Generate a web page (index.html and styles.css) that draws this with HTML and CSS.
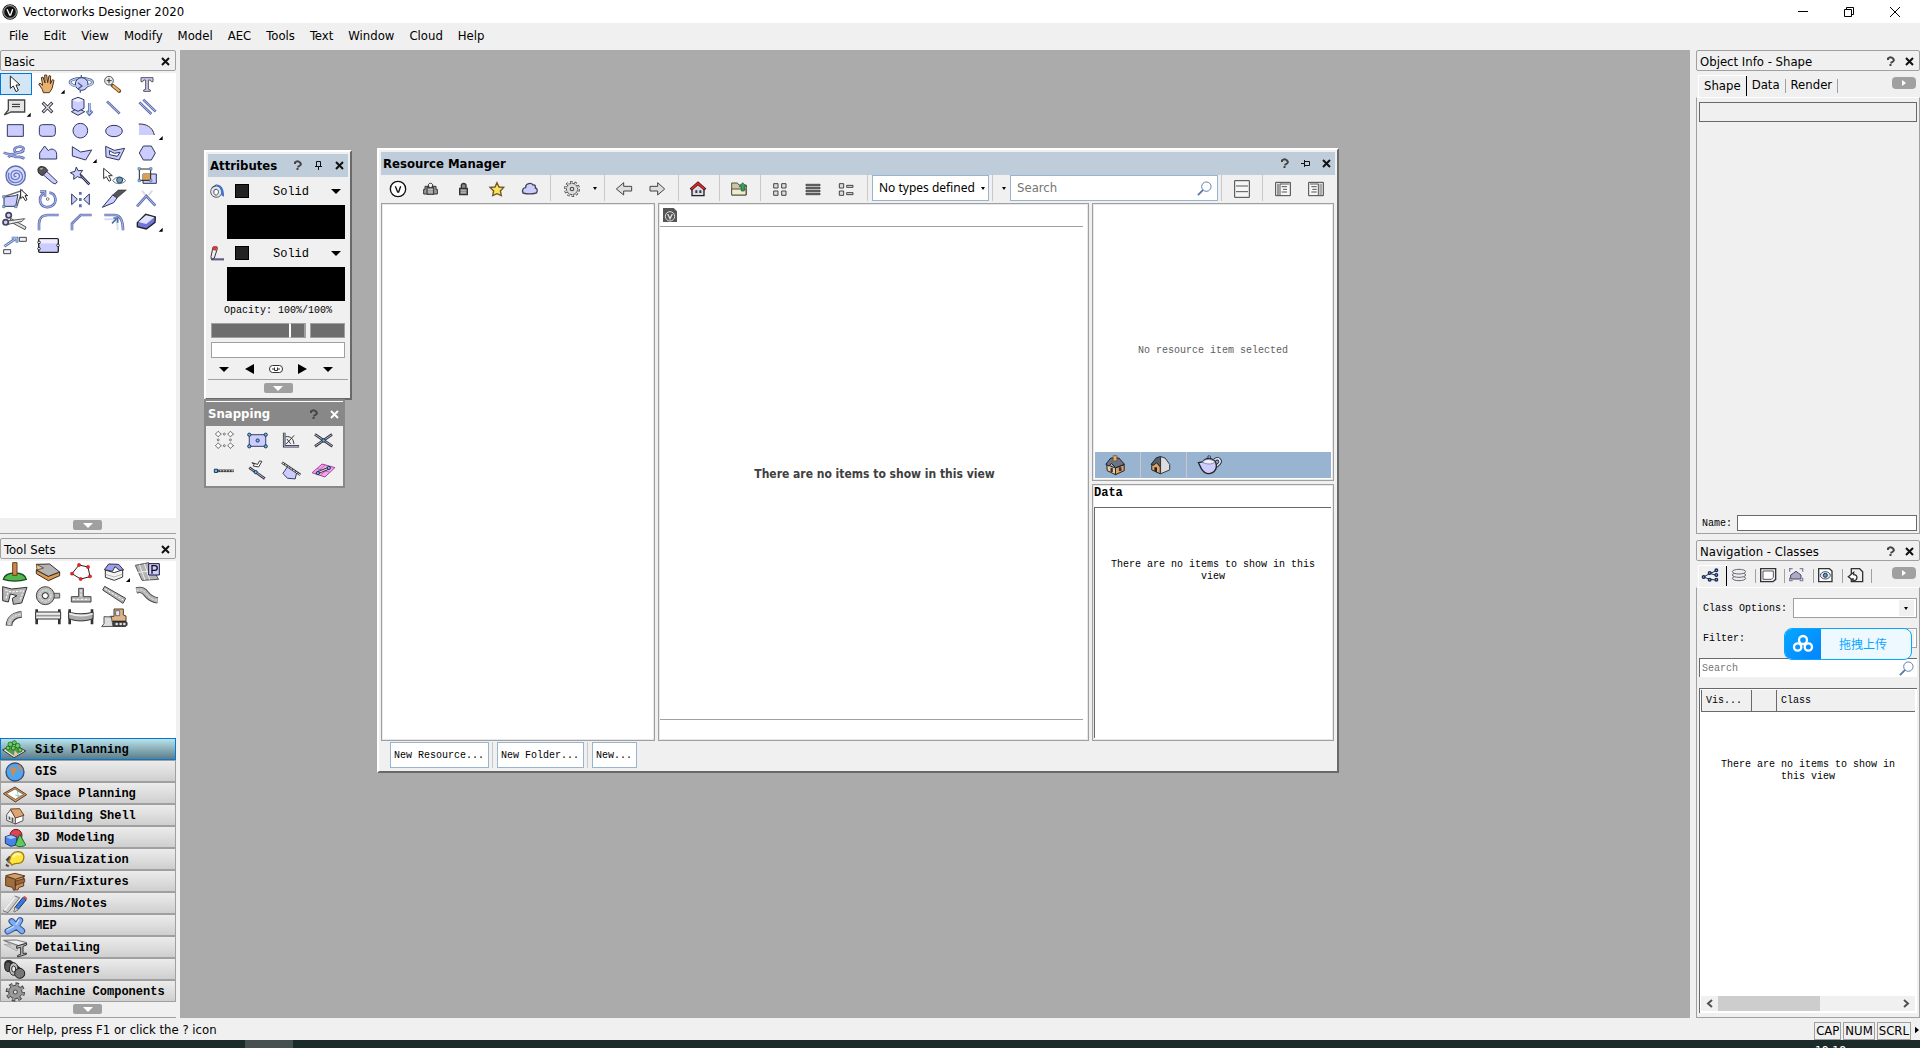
FILE: index.html
```
<!DOCTYPE html>
<html lang="en">
<head>
    <meta charset="utf-8">
    <title>Vectorworks Designer 2020</title>
    <link rel="stylesheet" href="styles.css">
</head>
<body>
    <header class="titlebar">
        <svg class="app-logo" viewBox="0 0 48 48"><circle cx="24" cy="24" r="23" fill="#222"/><circle cx="24" cy="24" r="19" fill="#111" stroke="#fff" stroke-width="2"/><path d="M15 16l8 17h3l6-17" fill="none" stroke="#fff" stroke-width="4"/></svg>
        <span class="app-name">Vectorworks Designer 2020</span>
        <div class="win-controls">
            <button aria-label="Minimize"><svg viewBox="0 0 12 12"><path d="M1 5.500h10"/></svg></button>
            <button aria-label="Restore"><svg viewBox="0 0 12 12"><path d="M1.500 3.500h7v7h-7zM3.500 3.500v-2h7v7h-2"/></svg></button>
            <button aria-label="Close"><svg viewBox="0 0 12 12"><path d="M1 1l10 10M11 1L1 11"/></svg></button>
        </div>
    </header>

    <nav class="menubar">
        <button>File</button><button>Edit</button><button>View</button><button>Modify</button><button>Model</button><button>AEC</button><button>Tools</button><button>Text</button><button>Window</button><button>Cloud</button><button>Help</button>
    </nav>

    <main class="workspace">
        <aside class="left-col">
            <section class="palette basic">
                <div class="pal-head"><h2>Basic</h2><button class="x" aria-label="Close Basic"><svg viewBox="0 0 9 9"><path d="M1 1l7 7M8 1L1 8"/></svg></button></div>
                <div class="tools grow">
                    <button class="on" aria-label="Selection"><svg viewBox="0 84 96 66"><path d="M31 93v37l9-7 8 17 7-4-7-16h12z" fill="#fff" stroke="#222" stroke-width="3"/></svg></button>
                    <button aria-label="Pan"><svg viewBox="96 84 96 66"><path d="M127 143l-3-10-11-16 4-3 8 7-4-23 5-2 6 18-1-24h6l3 23 4-21 5 1-1 24 6-13 5 2-6 25-8 12z" fill="#e9b070" stroke="#4c3420" stroke-width="3"/><path d="M191 134v12h-12z"/></svg></button>
                    <button aria-label="Flyover"><svg viewBox="198 84 96 66"><ellipse cx="244" cy="112" rx="34" ry="12" fill="none" stroke="#4a608c" stroke-width="8"/><ellipse cx="244" cy="112" rx="34" ry="12" fill="none" stroke="#b5cdf2" stroke-width="4"/><circle class="s" cx="245" cy="117" r="19"/><path d="M211 116c14 12 52 12 67-1" fill="none" stroke="#b5cdf2" stroke-width="4"/><path class="v" d="M234 113l12 10-12 9M244 90v8M241 136v7"/></svg></button>
                    <button aria-label="Zoom"><svg viewBox="297 84 96 66"><path d="M337 121l21 17" stroke="#6d4a20" stroke-width="11" stroke-linecap="round"/><path d="M340 123l17 14" stroke="#efb76c" stroke-width="6" stroke-linecap="round"/><circle cx="327" cy="107" r="13" fill="#e9eef0" stroke="#555" stroke-width="3"/><path d="M320 107h15M327 100v15" stroke="#333" stroke-width="3"/></svg></button>
                    <button aria-label="Text"><svg viewBox="396 84 96 66"><path d="M423 98h36v12h-5l-3-5h-6v28l6 2v4h-20v-4l6-2v-28h-6l-3 5h-5z" fill="#ccf" stroke="#555" stroke-width="3"/></svg></button>

                    <button aria-label="Callout"><svg viewBox="0 153 96 66"><path d="M25 165h49v36H33l-20 9 12-15z" fill="#e6e6e6" stroke="#444" stroke-width="4"/><path d="M36 178h24M36 185h24" stroke="#222" stroke-width="3"/><path d="M92 203v12H80z"/></svg></button>
                    <button aria-label="Locus"><svg viewBox="99 153 96 66"><path d="M128 173l29 29M157 173l-29 29" stroke="#333" stroke-width="9"/><path d="M130 175l25 25M155 175l-25 25" stroke="#dde" stroke-width="4"/></svg></button>
                    <button aria-label="Extrude"><svg viewBox="198 153 96 66"><path class="s" d="M214 200l20-10 20 10-20 11z"/><path class="s" d="M216 164l18-7 18 7v26l-18 9-18-9z"/><path d="M218 166l16 6 16-6-16-6z" fill="#f2f2ff"/><path class="b" d="M268 174v29M260 198l8 10 9-10"/><path class="c sky" d="M268 174v30M261 199l7 8 7-8"/></svg></button>
                    <button aria-label="Line"><svg viewBox="297 153 96 66"><path class="b" d="M321 169l38 37"/><path class="c" d="M322 170l36 35"/></svg></button>
                    <button aria-label="Double Line"><svg viewBox="396 153 96 66"><path class="b" d="M418 172l36 35M430 164l37 36"/><path class="c" d="M419 173l34 33M431 165l35 34"/></svg></button>

                    <button aria-label="Rectangle"><svg viewBox="0 222 96 66"><path class="s" d="M22 239h48v35H22z"/></svg></button>
                    <button aria-label="Rounded Rectangle"><svg viewBox="99 222 96 66"><rect class="s" x="118" y="239" width="48" height="35" rx="9"/></svg></button>
                    <button aria-label="Circle"><svg viewBox="198 222 96 66"><circle class="s" cx="241" cy="257" r="22"/></svg></button>
                    <button aria-label="Oval"><svg viewBox="297 222 96 66"><ellipse class="s" cx="342" cy="258" rx="25" ry="17"/></svg></button>
                    <button aria-label="Arc"><svg viewBox="396 222 96 66"><path d="M417 237c22-1 40 9 46 33h-46z" fill="#ccf"/><path class="n" d="M416 237c22-1 42 9 47 33"/><path d="M488 273v12h-12z"/></svg></button>

                    <button aria-label="Freehand"><svg viewBox="0 291 96 66"><path class="b" d="M11 323c13 7 26 6 40 1 12-4 20-7 20-13 0-8-26-9-28 4-1 10 22 9 28 1M25 337c8-12 18 0 28-1 8-1 13 0 20 5"/><path class="c" d="M11 323c13 7 26 6 40 1 12-4 20-7 20-13 0-8-26-9-28 4-1 10 22 9 28 1M25 337c8-12 18 0 28-1 8-1 13 0 20 5"/></svg></button>
                    <button aria-label="Bezier"><svg viewBox="99 291 96 66"><path class="s" d="M119 342v-18l15-21 11 14c8-9 25-5 25 12v13z"/></svg></button>
                    <button aria-label="Polyline"><svg viewBox="198 291 96 66"><path class="s" d="M217 305l25 16 33-6-18 30-40-12z"/><path d="M290 342v12h-12z"/></svg></button>
                    <button aria-label="Double Polygon"><svg viewBox="297 291 96 66"><path class="s" d="M317 304l26 12 31-6-17 35-39-9z"/><path d="M328 317l15 8 17-3-8 12-23-5z" fill="#fff" stroke="#2d3a5c" stroke-width="3"/></svg></button>
                    <button aria-label="Polygon"><svg viewBox="396 291 96 66"><path class="s" d="M430 303h24l12 21-12 21h-24l-12-21z"/></svg></button>

                    <button aria-label="Spiral"><svg viewBox="0 360 96 66"><circle cx="47" cy="392" r="29" fill="#d8dbff" stroke="#5b6fb0" stroke-width="4"/><path class="p" d="M49 394c-5 3-10-3-6-7 7-7 18 0 15 9-5 12-24 10-25-4-1-16 20-22 31-8 9 15-1 29-19 29-15-1-24-16-18-30"/></svg></button>
                    <button aria-label="Eyedropper"><svg viewBox="99 360 96 66"><path class="s" d="M127 387l13-8 32 31-6 7-9-4z"/><path d="M116 368c8-7 23-2 27 9l-14 14c-9 1-20-12-13-23z" fill="#555" stroke="#222" stroke-width="3"/><path d="M121 372l7-2" stroke="#bbb" stroke-width="4"/></svg></button>
                    <button aria-label="Magic Wand"><svg viewBox="198 360 96 66"><path d="M240 389l28 29" stroke="#223" stroke-width="8"/><path d="M241 390l26 27" stroke="#aaf" stroke-width="3"/><path class="s" d="M229 366l5 11 14-1-8 11 5 12-13-4-11 8 1-13-11-7 14-4z"/></svg></button>
                    <button aria-label="Visibility"><svg viewBox="297 360 96 66"><path d="M311 370v31l8-6 8 14 6-4-7-13h11z" fill="#fff" stroke="#333" stroke-width="3"/><path d="M338 407c10-14 28-14 39 0-11 12-29 12-39 0z" fill="#fff" stroke="#678" stroke-width="3"/><circle cx="359" cy="405" r="9" fill="#6a9cc0" stroke="#345" stroke-width="3"/></svg></button>
                    <button aria-label="Attribute Mapping"><svg viewBox="396 360 96 66"><path class="s" d="M429 387h40v28h-40z"/><path d="M429 386h24v20h-24z" fill="#dba050"/><path d="M418 372h34v34h-34z" fill="none" stroke="#222" stroke-width="3"/><path class="k" d="M414 368h7v7h-7zM449 368h7v7h-7zM414 403h7v7h-7zM449 403h7v7h-7z"/></svg></button>

                    <button aria-label="Reshape"><svg viewBox="0 429 96 66"><path class="s" d="M12 456l34-4 8-4-7 36H12z"/><path d="M12 455l54-18-15 46" fill="none" stroke="#666" stroke-width="4"/><path d="M62 433v28l7-6 7 12 5-3-6-12h8z" fill="#fff" stroke="#222" stroke-width="3"/><path class="k" d="M8 452h7v7H8zM8 481h7v7H8zM44 481h7v7h-7z"/></svg></button>
                    <button aria-label="Rotate"><svg viewBox="99 429 96 66"><path class="b" d="M130 445c-16 14-12 37 8 41 17 3 31-10 28-26-2-10-9-16-18-17M120 440h15v15"/><path class="c" d="M130 445c-16 14-12 37 8 41 17 3 31-10 28-26-2-10-9-16-18-17M120 440h15v15"/><circle cx="143" cy="462" r="4" fill="none" stroke="#777" stroke-width="3"/></svg></button>
                    <button aria-label="Mirror"><svg viewBox="198 429 96 66"><path class="s" d="M215 447l17 16-17 16zM268 447l-17 16 17 16z"/><path class="b" d="M241 441v8M241 459v9M241 478v9"/></svg></button>
                    <button aria-label="Split"><svg viewBox="297 429 96 66"><path d="M379 435l-28 24-13-9 17-15z" fill="#555" stroke="#333" stroke-width="2"/><path class="s" d="M338 450l13 9-10 14-34 14z"/></svg></button>
                    <button aria-label="Connect"><svg viewBox="396 429 96 66"><path d="M426 437l10 13M457 437l-11 13" stroke="#ddd" stroke-width="6"/><path class="b" d="M411 484l28-31 27 29"/><path class="c" d="M411 484l28-31 27 29"/></svg></button>

                    <button aria-label="Trim"><svg viewBox="0 498 96 66"><path d="M32 520l46 26-3 8-45-24z" fill="#ddd" stroke="#555" stroke-width="3"/><path d="M22 528l52-7-8 8-42 9z" fill="#eee" stroke="#555" stroke-width="3"/><circle cx="26" cy="511" r="8" fill="#ccf" stroke="#445" stroke-width="5"/><circle cx="17" cy="532" r="8" fill="#ccf" stroke="#445" stroke-width="5"/></svg></button>
                    <button aria-label="Fillet"><svg viewBox="99 498 96 66"><path class="b" d="M117 556v-20c0-15 10-26 27-26h32"/><path class="c" d="M117 556v-20c0-15 10-26 27-26h32"/></svg></button>
                    <button aria-label="Chamfer"><svg viewBox="198 498 96 66"><path class="b" d="M216 556v-20l26-26h33"/><path class="c" d="M216 556v-20l26-26h33"/></svg></button>
                    <button aria-label="Offset"><svg viewBox="297 498 96 66"><path d="M313 523h26c9 0 14 10 14 32" fill="none" stroke="#d8dcf4" stroke-width="6"/><path class="b" d="M313 510h30c17 0 26 15 26 46"/><path class="c" d="M313 510h30c17 0 26 15 26 46"/><path d="M336 535l13-13M340 519h13v14" fill="none" stroke="#48709c" stroke-width="5"/></svg></button>
                    <button aria-label="Eraser"><svg viewBox="396 498 96 66"><path d="M412 533l25-25 29 8-1 16-26 20-27-7z" fill="#7373dd" stroke="#222" stroke-width="4"/><path d="M415 531l23-20 25 6-24 20z" fill="#e3e3ff"/><path d="M488 548v12h-12z"/></svg></button>

                    <button aria-label="Align"><svg viewBox="0 567 96 66"><path class="b" d="M13 604l34-23M35 579h16v14"/><path class="c sky" d="M13 604l34-23M35 579h16v14"/><path d="M58 577h21v12H58zM11 614h21v12H11z" fill="#eef" stroke="#444" stroke-width="3"/></svg></button>
                    <button aria-label="Symbol"><svg viewBox="99 567 96 66"><rect x="116" y="581" width="59" height="41" rx="3" fill="#ccf" stroke="#222" stroke-width="4"/><path d="M118 583h54v12h-54z" fill="#eef"/><circle class="r" cx="117" cy="592" r="4"/><circle class="r" cx="117" cy="611" r="4"/><circle class="r" cx="174" cy="601" r="4"/></svg></button>
                </div>
                <button class="fold" aria-label="Collapse Basic"></button>
            </section>

            <section class="palette">
                <div class="pal-head"><h2>Tool Sets</h2><button class="x" aria-label="Close Tool Sets"><svg viewBox="0 0 9 9"><path d="M1 1l7 7M8 1L1 8"/></svg></button></div>
                <div class="tools set">
                    <button aria-label="Stake"><svg viewBox="0 153 96 66"><path d="M10 208c3-12 14-19 35-19s31 7 34 19c-20 7-50 7-69 0z" fill="#53b64f" stroke="#154d1e" stroke-width="4"/><path d="M38 158h13v38H38z" fill="#c8874b" stroke="#6b3e1e" stroke-width="3"/></svg></button>
                    <button aria-label="Site Modifier"><svg viewBox="99 153 96 66"><path d="M109 180l36 19 34-13v11l-34 15-36-21z" fill="#e09a50" stroke="#3c2b1c" stroke-width="3"/><path d="M109 180l14-6-14-11 40-1 30 24-34 13z" fill="#b4b4b4" stroke="#333" stroke-width="3"/><path d="M109 163l22 11-20 6z" fill="#f3c08c" stroke="#3c2b1c" stroke-width="2"/></svg></button>
                    <button aria-label="Property Line"><svg viewBox="198 153 96 66"><path d="M237 165l27 6 6 29-28 7-26-16z" fill="#fff" stroke="#222" stroke-width="3"/><g fill="#e22" stroke="#900"><circle cx="237" cy="165" r="5"/><circle cx="264" cy="171" r="5"/><circle cx="270" cy="199" r="5"/><circle cx="242" cy="207" r="5"/><circle cx="216" cy="191" r="5"/></g></svg></button>
                    <button aria-label="Massing Model"><svg viewBox="297 153 96 66"><path d="M316 180l27 8 25-9v22l-25 10-27-9z" fill="#f3f3f3" stroke="#333" stroke-width="3"/><path d="M316 193l27 8 25-9" fill="none" stroke="#999" stroke-width="2"/><path d="M313 179l13-17 30 1 15 17-12 1-14-11-8 14z" fill="#9a9df5" stroke="#333" stroke-width="3"/><path d="M390 204v12h-12z"/></svg></button>
                    <button aria-label="Parking"><svg viewBox="396 153 96 66"><path d="M406 166l40-8 30 50-50 3z" fill="#b4b4b4" stroke="#555" stroke-width="3"/><path d="M418 164l17 46M433 161l16 48M414 187l48-5" stroke="#eee" stroke-width="3"/><path d="M446 161h32v34h-32z" fill="#ccf" stroke="#15153c" stroke-width="3"/><path d="M456 191v-24h9c9 0 9 14 0 14h-8" fill="none" stroke="#111" stroke-width="4"/></svg></button>

                    <button aria-label="Hardscape"><svg viewBox="0 222 96 66"><path d="M8 230l27 7 46-5-16 47-25 4-3-18 14-8-20-5-6 24-17-4z" fill="#b4b4b4" stroke="#333" stroke-width="3"/><path d="M16 240l19 6 36-4-12 31M18 265l6-18" fill="none" stroke="#fff" stroke-width="3" stroke-dasharray="7 4"/></svg></button>
                    <button aria-label="Cul-de-sac"><svg viewBox="99 222 96 66"><path d="M155 250h24v14h-24z" fill="#bbb" stroke="#555" stroke-width="3"/><circle cx="136" cy="257" r="27" fill="#bbb" stroke="#444" stroke-width="3"/><circle cx="136" cy="257" r="17" fill="none" stroke="#fff" stroke-width="2" stroke-dasharray="7 4"/><circle cx="136" cy="257" r="9" fill="#fff" stroke="#222" stroke-width="3"/></svg></button>
                    <button aria-label="Roadway Tee"><svg viewBox="198 222 96 66"><path d="M214 260h22v-25h14v25h23v16h-59z" fill="#b4b4b4" stroke="#444" stroke-width="3"/><path d="M218 268h51M243 239v20" stroke="#fff" stroke-width="3" stroke-dasharray="8 4"/></svg></button>
                    <button aria-label="Straight Road"><svg viewBox="297 222 96 66"><path d="M314 229l63 36-8 15-61-40z" fill="#b4b4b4" stroke="#444" stroke-width="3"/><path d="M314 236l56 34" stroke="#fff" stroke-width="3" stroke-dasharray="8 4"/></svg></button>
                    <button aria-label="Spline Road"><svg viewBox="396 222 96 66"><path d="M409 241c36-8 22 25 64 30" fill="none" stroke="#444" stroke-width="19"/><path d="M409 241c36-8 22 25 64 30" fill="none" stroke="#b4b4b4" stroke-width="14"/><path d="M409 241c36-8 22 25 64 30" fill="none" stroke="#fff" stroke-width="2" stroke-dasharray="7 4"/></svg></button>

                    <button aria-label="Curved Road"><svg viewBox="0 291 96 66"><path d="M27 347c1-18 14-32 38-34" fill="none" stroke="#444" stroke-width="20"/><path d="M27 345c1-18 14-30 37-32" fill="none" stroke="#bbb" stroke-width="14"/><path d="M27 345c1-18 14-30 37-32" fill="none" stroke="#fff" stroke-width="2" stroke-dasharray="7 4"/></svg></button>
                    <button aria-label="Guardrail"><svg viewBox="99 291 96 66"><path class="n t" d="M110 298v45M178 298v45"/><path d="M107 306h75v21h-75z" fill="#eee" stroke="#333" stroke-width="3"/><path d="M109 317h71" stroke="#999" stroke-width="5"/></svg></button>
                    <button aria-label="Curved Guardrail"><svg viewBox="198 291 96 66"><path class="n t" d="M209 298v45M276 298v45"/><path d="M206 306c22 7 51 7 73 0v20c-22 9-51 9-73 0z" fill="#aaa" stroke="#333" stroke-width="3"/><path d="M208 311c22 7 49 7 70 0" fill="none" stroke="#eee" stroke-width="5"/></svg></button>
                    <button aria-label="Grading"><svg viewBox="297 291 96 66"><path d="M330 319h12v-22h28v18l8 3v16h-48z" fill="#dfb387" stroke="#4a3c31" stroke-width="3"/><path d="M347 302h12v15h-12z" fill="#dde9ff" stroke="#4a3c31" stroke-width="2"/><path d="M338 334h38c7 0 7 15 0 15h-38z" fill="#444" stroke="#222" stroke-width="3"/><g fill="#ddd"><circle cx="350" cy="342" r="4"/><circle cx="362" cy="342" r="4"/><circle cx="373" cy="342" r="4"/></g><path d="M312 320l22 1 5 28-34 1 7-9z" fill="#ddd" stroke="#555" stroke-width="3"/></svg></button>
                </div>
                <ul class="sets">
                    <li><button class="on"><svg viewBox="3 57 84 60"><path d="M8 87l34-17 35 20-35 20z" fill="#eee" stroke="#333" stroke-width="3"/><path d="M16 86l25-12 28 16-26 15z" fill="#5b9b4c"/><path d="M44 88l10 12-12 4z" fill="#ebc5bb"/><g fill="#62d456" stroke="#154d1e" stroke-width="2"><circle cx="24" cy="81" r="6"/><circle cx="31" cy="70" r="7"/><circle cx="43" cy="65" r="6"/><circle cx="53" cy="74" r="7"/><circle cx="60" cy="87" r="6"/><circle cx="40" cy="81" r="6"/></g></svg>Site Planning</button></li>
                    <li><button><svg viewBox="3 123 84 60"><circle cx="45" cy="153" r="27" fill="#4da5f0" stroke="#444c6c" stroke-width="4"/><path d="M29 145l10-9 12 8-1 7-7 4-1 13-6-6-2-10zM56 129l12 14-6 7-9-13z" fill="#c98b5b"/></svg>GIS</button></li>
                    <li><button><svg viewBox="3 189 84 60"><path d="M10 218l35-20 35 23-34 22z" fill="#d5985d" stroke="#573b27" stroke-width="3"/><path d="M19 218l26-14 26 17-25 14z" fill="#fff" stroke="#573b27" stroke-width="2"/><path d="M52 209l3 17 12-4M55 226l-9-4" fill="none" stroke="#5aa" stroke-width="2"/></svg>Space Planning</button></li>
                    <li><button><svg viewBox="3 255 84 60"><path d="M20 281l12-15 14 23v20l-26-11z" fill="#eee" stroke="#555" stroke-width="3"/><path d="M46 290l23-8v17l-23 10z" fill="#fff" stroke="#555" stroke-width="3"/><path d="M31 264l28-1 13 20-26 8z" fill="#dda574" stroke="#6c4324" stroke-width="3"/><path d="M26 286l5 2v9l-5-2zM35 289l5 2v13l-5-2z" fill="#555"/></svg>Building Shell</button></li>
                    <li><button><svg viewBox="3 321 84 60"><circle cx="48" cy="343" r="18" fill="#e2414f" stroke="#6c1c28" stroke-width="3"/><path d="M16 347l17-5 18 6-3 24-15 4-17-9z" fill="#4784e6" stroke="#19387b" stroke-width="3"/><path d="M17 348l16 7 16-6-16-6z" fill="#9ec6ff"/><path d="M59 339l18 33c-9 7-24 6-31 0z" fill="#61c866" stroke="#1e6229" stroke-width="3"/></svg>3D Modeling</button></li>
                    <li><button><svg viewBox="3 387 84 60"><path d="M22 421l11-12M19 428l9 4" stroke="#444" stroke-width="14"/><path d="M26 420c6-6 3-12 10-20 9-11 28-10 34 0 6 13-2 26-14 27-9 1-12-1-20 5z" fill="#ffe63f" stroke="#a07d14" stroke-width="4"/><path d="M39 409c4-10 15-13 22-6" fill="none" stroke="#fff8b8" stroke-width="6"/><path d="M19 424l11 8" stroke="#ccc" stroke-width="6"/></svg>Visualization</button></li>
                    <li><button><svg viewBox="3 453 84 60"><path d="M17 467l29 6v34l-5 1-4-9-20-5z" fill="#a36e3e" stroke="#5f3b1e" stroke-width="3"/><path d="M46 473l25-7v29l-14 4-4 8-7-1z" fill="#c49058" stroke="#5f3b1e" stroke-width="3"/><path d="M17 464l28-7 30 8-29 10z" fill="#d0a06b" stroke="#5f3b1e" stroke-width="3"/><path d="M47 480l27-7v10l-27 10z" fill="#9b6535" stroke="#422" stroke-width="2"/></svg>Furn/Fixtures</button></li>
                    <li><button><svg viewBox="3 519 84 60"><path d="M10 570l34-45 15 5-35 45z" fill="#ccc" stroke="#777" stroke-width="3"/><path d="M13 568l32-41" stroke="#eee" stroke-width="6"/><path d="M45 559l24-30 10 7-25 30-12 7z" fill="#3d79dd" stroke="#1b376d" stroke-width="3"/><path d="M69 529l4-5 9 7-3 5z" fill="#df5245"/><path d="M45 559l9 7-12 7z" fill="#ebc395"/></svg>Dims/Notes</button></li>
                    <li><button><svg viewBox="3 585 84 60"><path d="M35 601l14 14M60 598l-10 17M49 617l-26 14M50 616l16 14" stroke="#305294" stroke-width="19" stroke-linecap="round"/><path d="M35 601l14 14M60 598l-10 17M49 617l-26 14M50 616l16 14" stroke="#7fadf2" stroke-width="13" stroke-linecap="round"/><path d="M57 597l-9 13M21 627l19-10" stroke="#c8deff" stroke-width="4" stroke-linecap="round"/></svg>MEP</button></li>
                    <li><button><svg viewBox="3 651 84 60"><path d="M11 658l44 18-4 14L12 670l20 2z" fill="#ccc" stroke="#999" stroke-width="2"/><path d="M11 658l38-1 32 8-24 9z" fill="#eee" stroke="#777" stroke-width="3"/><path d="M50 675l30-8v5l-11 4v22l10-2v4l-26 8v-5l9-3v-21l-12 3z" fill="#bbb" stroke="#333" stroke-width="3"/></svg>Detailing</button></li>
                    <li><button><svg viewBox="3 717 84 60"><path d="M26 730l36 28" stroke="#333" stroke-width="27" stroke-linecap="round"/><ellipse cx="24" cy="737" rx="10" ry="15" fill="#555" stroke="#222" stroke-width="3"/><ellipse cx="41" cy="744" rx="13" ry="19" fill="#bbb" stroke="#222" stroke-width="3"/><ellipse cx="41" cy="744" rx="6" ry="9" fill="#eee" stroke="#333" stroke-width="3"/><circle cx="59" cy="757" r="15" fill="#777" stroke="#222" stroke-width="3"/></svg>Fasteners</button></li>
                    <li><button><svg viewBox="3 783 84 60"><circle cx="46" cy="813" r="24" fill="none" stroke="#444" stroke-width="10" stroke-dasharray="10 8.800"/><circle cx="46" cy="813" r="20" fill="#999" stroke="#444" stroke-width="3"/><circle cx="46" cy="813" r="22" fill="none" stroke="#999" stroke-width="8" stroke-dasharray="6 11.300" stroke-dashoffset="-2"/><circle cx="46" cy="813" r="6" fill="#ddd" stroke="#444" stroke-width="3"/></svg>Machine Components</button></li>
                </ul>
                <button class="fold" aria-label="Collapse Tool Sets"></button>
            </section>
        </aside>

        <section class="canvas">
            <div class="window attributes">
                <div class="win-head"><h2>Attributes</h2>
                    <button aria-label="Help"><svg class="q" viewBox="0 0 9 11"><path d="M2 4V2.500Q4.500 0 7 2.500T4.500 7M4.500 8v2"/></svg></button>
                    <button aria-label="Pin"><svg viewBox="0 0 9 9"><path d="M2.500 5.500v-5h4v5M1 5.500h7M4.500 6v3"/></svg></button>
                    <button class="x" aria-label="Close"><svg viewBox="0 0 9 9"><path d="M1 1l7 7M8 1L1 8"/></svg></button>
                </div>
                <div class="attr-row">
                    <svg class="attr-icon" viewBox="45 131 45 45"><circle cx="64" cy="154" r="17" fill="#e4e6f0" stroke="#556" stroke-width="3"/><path d="M61 133c16-2 27 10 26 36l-8-4c1-18-6-26-18-32z" fill="#3d73c8"/><path d="M57 150c8-8 17 1 12 10s-15 3-12-10zM50 142l14-8" fill="#fff" stroke="#445" stroke-width="3"/></svg>
                    <button class="swatch" aria-label="Fill colour"></button>
                    <label class="pick"><select aria-label="Fill style"><option>Solid</option></select></label>
                </div>
                <button class="ink" aria-label="Fill"></button>
                <div class="attr-row">
                    <svg class="attr-icon" viewBox="45 317 45 45"><path d="M49 357h38" stroke="#446" stroke-width="6"/><path d="M53 356h33" stroke="#99c" stroke-width="2"/><path d="M48 349l6-29h12l1 5-9 28-9 4z" fill="#eee" stroke="#334" stroke-width="3"/><path d="M52 329l3-11h12l-3 13z" fill="#d33c3c"/></svg>
                    <button class="swatch" aria-label="Pen colour"></button>
                    <label class="pick"><select aria-label="Pen style"><option>Solid</option></select></label>
                </div>
                <button class="ink" aria-label="Pen"></button>
                <label class="opacity" for="opacity">Opacity: 100%/100%</label>
                <div class="sliders"><input type="range" id="opacity" min="0" max="100" value="100"><button aria-label="Opacity settings"></button></div>
                <input class="line-style" type="text" aria-label="Line style">
                <div class="markers">
                    <button aria-label="Start marker style"><svg viewBox="0 0 16 10"><path d="M3 3h10L8 8z"/></svg></button>
                    <button aria-label="Start marker"><svg viewBox="0 0 16 10"><path d="M3 5l9-5v10z"/></svg></button>
                    <button aria-label="Link markers"><svg viewBox="0 0 16 10"><path d="M4.500 1.500h7q3 0 3 3.500t-3 3.500h-7q-3 0-3-3.500t3-3.500z" fill="#fff" stroke="#333"/><path d="M4 5h2M10 5h2M6.500 3.500v3h3v-3" fill="none" stroke="#333"/></svg></button>
                    <button aria-label="End marker"><svg viewBox="0 0 16 10"><path d="M13 5L4 0v10z"/></svg></button>
                    <button aria-label="End marker style"><svg viewBox="0 0 16 10"><path d="M3 3h10L8 8z"/></svg></button>
                </div>
                <button class="fold" aria-label="Collapse Attributes"></button>
            </div>

            <div class="snapping">
                <div class="win-head"><h2>Snapping</h2>
                    <button aria-label="Help"><svg class="q" viewBox="0 0 9 11"><path d="M2 4V2.500Q4.500 0 7 2.500T4.500 7M4.500 8v2"/></svg></button>
                    <button class="x" aria-label="Close"><svg viewBox="0 0 9 9"><path d="M1 1l7 7M8 1L1 8"/></svg></button>
                </div>
                <div class="snap-grid">
                    <button aria-label="Snap to Grid"><svg viewBox="40 855 99 93"><g fill="#fff" stroke="#333" stroke-width="2"><path d="M70 871l4 5 6 4-6 4-4 5-4-5-5-4 5-4zM108 871l4 5 6 4-6 4-4 5-4-5-5-4 5-4zM70 907l4 5 6 4-6 4-4 5-4-5-5-4 5-4zM108 907l4 5 6 4-6 4-4 5-4-5-5-4 5-4z"/><circle cx="89" cy="880" r="3"/><circle cx="89" cy="916" r="3"/><circle cx="70" cy="898" r="3"/><circle cx="108" cy="898" r="3"/></g></svg></button>
                    <button aria-label="Snap to Object"><svg viewBox="139 855 99 93"><path class="s" d="M163 882h51v36h-51z"/><g class="k2"><circle cx="163" cy="882" r="5"/><circle cx="214" cy="882" r="5"/><circle cx="163" cy="918" r="5"/><circle cx="214" cy="918" r="5"/><circle cx="189" cy="900" r="5"/></g></svg></button>
                    <button aria-label="Snap to Angle"><svg viewBox="238 855 99 93"><path class="n t" d="M268 876v42h46"/><path class="c" d="M268 877v41h45"/><path class="n" d="M274 911l25-27M273 888c15-2 24 7 25 23M276 895l12 15"/></svg></button>
                    <button aria-label="Snap to Intersection"><svg viewBox="337 855 99 93"><path class="n t" d="M360 881l54 37M413 881l-53 37"/><path class="c" d="M361 882l52 35M412 882l-51 35"/><circle class="k2" cx="387" cy="900" r="5"/></svg></button>
                    <button aria-label="Smart Points"><svg viewBox="40 948 99 93"><path class="n t" d="M70 994h48"/><path d="M75 994h42" stroke="#fff" stroke-width="3" stroke-dasharray="5 4"/><path class="k2" d="M58 989h10v10H58z"/></svg></button>
                    <button aria-label="Snap to Distance"><svg viewBox="139 948 99 93"><path class="n t" d="M163 984l48 34"/><path class="c" d="M164 985l46 32"/><path d="M171 969l8 3-4 7 17 3 10-17-7-2-6 11z" fill="#fff" stroke="#333" stroke-width="3"/><circle class="k2" cx="183" cy="998" r="5"/></svg></button>
                    <button aria-label="Smart Edge"><svg viewBox="238 948 99 93"><path class="s" d="M279 980l28 18-5 21-24-2-14-15z"/><path class="n t" d="M261 968l57 38"/><path d="M262 969l55 37" stroke="#fff" stroke-width="3" stroke-dasharray="7 3"/></svg></button>
                    <button aria-label="Snap to Working Plane"><svg viewBox="337 948 99 93"><path d="M351 1000l31-27 40 11-31 29z" fill="#f3a4ea" stroke="#a53f9d" stroke-width="3"/><path d="M367 987l38 11M378 1007l29-26M361 1002l31-27" stroke="#a53f9d" stroke-width="2"/><path d="M369 1000l33-14" stroke="#222" stroke-width="8"/><path d="M369 1000l33-14" stroke="#ddd" stroke-width="4"/><g class="k2"><circle cx="369" cy="1001" r="5"/><circle cx="403" cy="985" r="5"/></g></svg></button>
                </div>
            </div>

            <div class="window resources">
                <div class="win-head"><h2>Resource Manager</h2>
                    <button aria-label="Help"><svg class="q" viewBox="0 0 9 11"><path d="M2 4V2.500Q4.500 0 7 2.500T4.500 7M4.500 8v2"/></svg></button>
                    <button aria-label="Pin"><svg viewBox="0 0 9 9"><path d="M3.500 2.500h5v4h-5M3.500 1v7M0 4.500h3"/></svg></button>
                    <button class="x" aria-label="Close"><svg viewBox="0 0 9 9"><path d="M1 1l7 7M8 1L1 8"/></svg></button>
                </div>
                <div class="toolbar">
                    <button aria-label="Vectorworks Libraries"><svg viewBox="36 105 99 78"><circle cx="84" cy="147" r="23" fill="#fff" stroke="#111" stroke-width="4"/><path d="M76 139l7 17h3l6-17" fill="none" stroke="#111" stroke-width="4"/></svg></button>
                    <button aria-label="Workgroup Libraries"><svg viewBox="135 105 99 78"><g fill="#999" stroke="#333" stroke-width="3"><path d="M161 162v-14h4v-9h12v23zM202 162v-14h-4v-9h-12v23z"/><path d="M175 143v-8c1-7 12-7 13 0v8" fill="none"/><path d="M171 143h20v20h-20z"/><path d="M174 149h14M174 156h14" stroke="#ddd" stroke-width="2"/></g></svg></button>
                    <button aria-label="User Libraries"><svg viewBox="234 105 99 78"><g fill="#888" stroke="#333" stroke-width="4"><path d="M274 146v-11c2-6 12-6 14 0v11"/><path d="M269 145h23v19h-23z"/><path d="M273 152h15M273 158h15" stroke="#ccc" stroke-width="2"/></g></svg></button>
                    <button aria-label="Favorites"><svg viewBox="333 105 99 78"><path d="M381 128l6 13 14 1-10 11 3 14-13-6-13 6 3-14-11-11 15-1z" fill="#fbe25c" stroke="#6c5723" stroke-width="4"/></svg></button>
                    <button aria-label="Cloud"><svg viewBox="432 105 99 78"><path d="M459 159c-4-11 2-16 8-16-1-13 17-17 22-8 7-2 8 4 7 9 8 1 6 12 3 15-12 3-29 3-40 0z" fill="#ccf" stroke="#445" stroke-width="4"/></svg></button>
                    <i class="sep"></i>
                    <button aria-label="Settings"><svg viewBox="555 105 99 78"><circle cx="606" cy="147" r="20" fill="none" stroke="#444" stroke-width="8" stroke-dasharray="7 5.600"/><circle cx="606" cy="147" r="17" fill="#ddd" stroke="#555" stroke-width="3"/><circle cx="606" cy="147" r="19" fill="none" stroke="#ddd" stroke-width="6" stroke-dasharray="4 7.900" stroke-dashoffset="-1"/><circle cx="606" cy="147" r="5" fill="#fff" stroke="#555" stroke-width="4"/></svg></button>
                    <button class="caret" aria-label="Settings menu"></button>
                    <i class="sep"></i>
                    <button aria-label="Back"><svg viewBox="720 105 99 78"><path class="a" d="M742 147l22-19v11h24v14h-24v12z"/></svg></button>
                    <button aria-label="Forward"><svg viewBox="819 105 99 78"><path class="a" d="M887 147l-21-19v11h-23v14h23v12z"/></svg></button>
                    <i class="sep"></i>
                    <button aria-label="Home"><svg viewBox="942 105 99 78"><path d="M969 147v20h36v-20l-18-15z" fill="#ddd" stroke="#222" stroke-width="4"/><path d="M979 151h6v8h-6zM991 151h6v8h-6z" fill="#336"/><path d="M965 149l22-19 22 19" fill="none" stroke="#222" stroke-width="9"/><path d="M967 147l20-17 20 17" fill="none" stroke="#e22" stroke-width="5"/></svg></button>
                    <i class="sep"></i>
                    <button aria-label="New Folder"><svg viewBox="1065 105 99 78"><path d="M1088 164v-35h17l5 6h22v30h-44z" fill="#cbc6a4" stroke="#555240" stroke-width="3"/><path d="M1088 147h43v18h-43z" fill="#f0ebd0" stroke="#555240" stroke-width="3"/><path d="M1117 153v-13h-6l10-12 11 12h-6v13z" fill="#37a263" stroke="#14502b" stroke-width="2"/></svg></button>
                    <i class="sep"></i>
                    <button aria-label="Thumbnails"><svg viewBox="1188 105 99 78"><path class="a" d="M1214 131h13v13h-13zM1238 131h13v13h-13zM1214 153h13v13h-13zM1238 153h13v13h-13z"/></svg></button>
                    <button aria-label="List"><svg viewBox="1287 105 99 78"><path class="a" d="M1311 133h42v4h-42zM1311 142h42v4h-42zM1311 151h42v4h-42zM1311 160h42v4h-42z"/></svg></button>
                    <button aria-label="Details"><svg viewBox="1386 105 99 78"><path class="a" d="M1411 131h13v13h-13zM1433 136h19v6h-19zM1411 153h13v13h-13zM1433 158h19v6h-19z"/></svg></button>
                    <i class="sep"></i>
                    <label class="types"><select aria-label="Resource types"><option>No types defined</option></select></label>
                    <i class="sep"></i>
                    <button class="caret" aria-label="Search options"></button>
                    <div class="search"><input type="text" placeholder="Search" aria-label="Search resources"><svg viewBox="0 0 16 16"><circle cx="10" cy="6" r="5"/><path d="M6.500 9.500L1 15" stroke-width="2"/></svg></div>
                    <i class="sep"></i>
                    <button aria-label="Show file browser"><svg viewBox="1098 105 99 78"><path class="a pale" d="M1124 122h44v50h-44z"/><path class="g" d="M1128 138h36M1128 155h36"/></svg></button>
                    <i class="sep"></i>
                    <button aria-label="Left pane"><svg viewBox="1221 105 99 78"><path class="a pale" d="M1247 127h44v40h-44z"/><path d="M1251 131h6v34h-6z" fill="#999"/><path class="g" d="M1260 132h28M1265 140h16M1269 148h12M1265 156h16M1260 131v34"/></svg></button>
                    <button aria-label="Right pane"><svg viewBox="1320 105 99 78"><path class="a pale" d="M1346 127h44v40h-44z"/><path d="M1378 131h9v34h-9z" fill="#aaa"/><path class="g" d="M1350 132h24M1354 140h16M1357 148h13M1354 156h16M1375 131v34"/></svg></button>
                </div>
                <div class="panes">
                    <div class="pane files"></div>
                    <div class="pane items">
                        <div class="crumb"><svg viewBox="0 0 42 42"><path d="M0 0h32l10 10v32H0z" fill="#555"/><circle cx="21" cy="25" r="14" fill="none" stroke="#ddd" stroke-width="3"/><path d="M14 18l7 14 7-14" fill="none" stroke="#ddd" stroke-width="4"/></svg></div>
                        <p>There are no items to show in this view</p>
                        <div class="items-foot"></div>
                    </div>
                    <div class="details">
                        <div class="pane preview">
                            <p>No resource item selected</p>
                            <div class="render-bar">
                                <button aria-label="Rendered"><svg viewBox="45 66 132 78"><path d="M79 104l26 10v20l-25-12z" fill="#f0c898" stroke="#222" stroke-width="3"/><path d="M105 114l26-10v18l-26 12z" fill="#dca469" stroke="#222" stroke-width="3"/><path d="M76 103l15-19h24l17 19-27 10-12-13-8 8z" fill="#6b7486" stroke="#222" stroke-width="3"/><path d="M98 77h11v16H98z" fill="#e2ad72" stroke="#6c4324" stroke-width="2"/><path d="M115 112h8v11h-8zM90 113h7v13h-7z" fill="#334"/></svg></button>
                                <button aria-label="Hidden line"><svg viewBox="180 66 138 78"><path d="M213 106l14-10 12 14v22l-26-12z" fill="#dca469" stroke="#222" stroke-width="3"/><path d="M211 103l16-20 13-4v33l-12-14-10 8z" fill="#555e6e" stroke="#222" stroke-width="3"/><path d="M240 79l14 5 14 19v17l-28 12z" fill="#ddd" stroke="#333" stroke-width="3"/><path d="M221 112h8v15l-8-4z" fill="#222"/></svg></button>
                                <button aria-label="Teapot"><svg viewBox="321 66 132 78"><path d="M402 90c13-10 22 3 13 12-5 6-10 9-16 12" fill="none" stroke="#222" stroke-width="10"/><path d="M402 90c13-10 22 3 13 12-5 6-10 9-16 12" fill="none" stroke="#ddf" stroke-width="5"/><path d="M354 98l12-2c10-14 26-15 39 0 8 19-4 35-21 35-13 0-17-9-22-16z" fill="#ccf" stroke="#222" stroke-width="4"/><path d="M366 96c10 8 29 8 38 0-7-8-30-12-38 0z" fill="#eef" stroke="#667" stroke-width="2"/><circle class="s" cx="386" cy="81" r="4"/></svg></button>
                            </div>
                        </div>
                        <div class="pane data">
                            <h3>Data</h3>
                            <div class="data-box"><p>There are no items to show in this view</p></div>
                        </div>
                    </div>
                </div>
                <div class="actions"><button>New Resource...</button><i class="sep"></i><button>New Folder...</button><i class="sep"></i><button>New...</button></div>
            </div>
        </section>

        <aside class="right-col">
            <section class="info">
                <div class="pal-head"><h2>Object Info - Shape</h2><button aria-label="Help"><svg class="q" viewBox="0 0 9 11"><path d="M2 4V2.500Q4.500 0 7 2.500T4.500 7M4.500 8v2"/></svg></button><button class="x" aria-label="Close"><svg viewBox="0 0 9 9"><path d="M1 1l7 7M8 1L1 8"/></svg></button></div>
                <div class="tabs"><button class="on">Shape</button><button>Data</button><button>Render</button><button class="more" aria-label="More"></button></div>
                <div class="tab-body">
                    <div class="shape-type"></div>
                    <div class="name-row"><label for="obj-name">Name:</label><input id="obj-name" type="text"></div>
                </div>
            </section>
            <section class="navigation">
                <div class="pal-head"><h2>Navigation - Classes</h2><button aria-label="Help"><svg class="q" viewBox="0 0 9 11"><path d="M2 4V2.500Q4.500 0 7 2.500T4.500 7M4.500 8v2"/></svg></button><button class="x" aria-label="Close"><svg viewBox="0 0 9 9"><path d="M1 1l7 7M8 1L1 8"/></svg></button></div>
                <div class="tabs icon-tabs">
                    <button class="on" aria-label="Classes"><svg viewBox="57 195 84 60"><path d="M71 225l19-11 18-7M71 225l18 7 19 2M90 214l18 6" fill="none" stroke="#234" stroke-width="3"/><g fill="#9bd" stroke="#14295c" stroke-width="4"><circle cx="71" cy="225" r="4"/><circle cx="89" cy="213" r="4"/><circle cx="89" cy="233" r="4"/><circle cx="109" cy="205" r="4"/><circle cx="109" cy="219" r="4"/><circle cx="109" cy="233" r="4"/></g></svg></button>
                    <button aria-label="Design Layers"><svg viewBox="141 195 84 60"><g fill="#eee" stroke="#667" stroke-width="3"><ellipse cx="177" cy="232" rx="20" ry="7"/><ellipse cx="177" cy="222" rx="20" ry="7"/><ellipse cx="177" cy="212" rx="20" ry="7"/></g></svg></button>
                    <button aria-label="Sheet Layers"><svg viewBox="228 195 84 60"><path d="M242 203h45v32l-8 7h-37z" fill="#eee" stroke="#333" stroke-width="4"/><path d="M249 210h31v19l-6 6h-25z" fill="#fff" stroke="#556" stroke-width="3"/></svg></button>
                    <button aria-label="Viewports"><svg viewBox="315 195 84 60"><path d="M332 234v-12l9-6 7-5 7 5 8 6v12z" fill="#aac" stroke="#545" stroke-width="3"/><path d="M329 212v-9h9M359 203h9v9M329 230v9h9M359 239h9v-9" fill="none" stroke="#7786ac" stroke-width="4"/></svg></button>
                    <button aria-label="Saved Views"><svg viewBox="402 195 84 60"><path d="M416 203h32l8 7v32h-40z" fill="#fff" stroke="#333" stroke-width="4"/><ellipse cx="436" cy="223" rx="15" ry="11" fill="#dfe8ff" stroke="#456" stroke-width="3"/><circle cx="436" cy="223" r="6" fill="#69b" stroke="#234" stroke-width="3"/></svg></button>
                    <button aria-label="References"><svg viewBox="489 195 84 60"><path d="M514 203h25l9 9v30h-34z" fill="#eee" stroke="#333" stroke-width="4"/><path d="M521 239c12-1 14-17 0-18v-7l-16 13 14 11v-7" fill="#fff" stroke="#333" stroke-width="4"/></svg></button>
                    <button class="more" aria-label="More"></button>
                </div>
                <div class="tab-body">
                    <div class="field"><label for="class-options">Class Options:</label><span class="combo"><select id="class-options"></select></span></div>
                    <div class="field"><label for="filter">Filter:</label><span class="combo"><select id="filter"></select></span>
                        <button class="upload"><svg viewBox="312 384 108 96"><g fill="none" stroke="#fff" stroke-width="7"><circle cx="366" cy="420" r="12"/><circle cx="350" cy="441" r="11"/><circle cx="382" cy="441" r="11"/></g></svg><span>拖拽上传</span></button>
                    </div>
                    <div class="nav-search"><input type="text" placeholder="Search" aria-label="Search classes"><svg viewBox="0 0 16 16"><circle cx="10" cy="6" r="5"/><path d="M6.500 9.500L1 15" stroke-width="2"/></svg></div>
                    <div class="list">
                        <table><thead><tr><th class="vis">Vis...</th><th class="gap"></th><th>Class</th></tr></thead></table>
                        <p>There are no items to show in this view</p>
                        <div class="scroll"><svg viewBox="0 0 9 9"><path d="M7 1L3 4.500 7 8"/></svg><span class="thumb"></span><svg viewBox="0 0 9 9"><path d="M2 1l4 3.500L2 8"/></svg></div>
                    </div>
                </div>
            </section>
        </aside>
    </main>

    <footer class="status"><span class="hint">For Help, press F1 or click the ? icon</span><span class="key">CAP</span><span class="key">NUM</span><span class="key">SCRL</span><svg viewBox="0 0 5 8"><path d="M0 0l5 4-5 4z"/></svg></footer>
    <div class="taskbar"><span class="task"></span><span class="clock">18:18</span></div>
</body>
</html>
```
FILE: styles.css
```
*{
    box-sizing: border-box;
}

body{
    margin: 0;
    height: 100vh;
    display: flex;
    flex-direction: column;
    overflow: hidden;
    background: #f0f0f0;
    color: #000;
    font: 13px/16px "DejaVu Sans Condensed", "Noto Sans", sans-serif;
}

h2, h3, p, ul{
    margin: 0;
    padding: 0;
    list-style: none;
}

button, input, select{
    font: inherit;
    color: inherit;
    margin: 0;
    padding: 0;
    border: 0;
    border-radius: 0;
    background: none;
    outline: none;
}

select{
    appearance: none;
}

svg{
    display: block;
    flex: none;
}

/* top of the window */
.titlebar{
    display: flex;
    align-items: center;
    height: 23px;
    background: #fff;
}

.app-logo{
    width: 16px;
    height: 16px;
    margin: 0 5px 0 2px;
}

.win-controls{
    margin-left: auto;
    display: flex;
    padding-right: 2px;
}

.win-controls button{
    width: 46px;
    height: 20px;
    display: flex;
    justify-content: center;
    align-items: center;
}

.win-controls svg{
    width: 12px;
    height: 12px;
    fill: none;
    stroke: #000;
}

.menubar{
    display: flex;
    height: 27px;
    padding: 0 2px;
}

.menubar button{
    padding: 0 8px 2px 7px;
}

.workspace{
    flex: 1;
    min-height: 0;
    display: flex;
}

/* shared palette parts */
.pal-head{
    display: flex;
    align-items: center;
    height: 21px;
    flex: none;
    border: 1px solid #a0a0a0;
    border-radius: 2px;
    padding: 2px 5px 0 3px;
}

.pal-head h2{
    flex: 1;
    font-size: 13px;
    font-weight: normal;
}

.pal-head button{
    width: 9px;
    margin-left: 10px;
}

.q{
    width: 9px;
    height: 11px;
    fill: none;
    stroke: #444;
    stroke-width: 2;
}

.x svg{
    width: 9px;
    height: 9px;
    stroke: #111;
    stroke-width: 2;
}

.fold{
    display: block;
    flex: none;
    width: 29px;
    height: 10px;
    margin: 2px auto 3px 73px;
    border-radius: 2px;
    background: #a0a0a0;
}

.fold::after{
    content: "";
    display: block;
    width: 0;
    margin: 0 auto;
    border: 5px solid transparent;
    border-top-color: #fff;
    border-bottom: 0;
}

/* icon paint */
.s{
    fill: #ccccff;
    stroke: #2d3a5c;
    stroke-width: 3;
}

.n{
    fill: none;
    stroke: #333;
    stroke-width: 3;
}

.t{
    stroke-width: 8;
}

.v{
    fill: none;
    stroke: #4a608c;
    stroke-width: 4;
}

.g{
    fill: none;
    stroke: #555;
    stroke-width: 3;
}

.b{
    fill: none;
    stroke: #5f6fae;
    stroke-width: 8;
}

.c{
    fill: none;
    stroke: #b4bcf4;
    stroke-width: 3;
}

.sky{
    stroke: #b8dcff;
}

.p{
    fill: none;
    stroke: #6c7cc4;
    stroke-width: 4;
}

.k{
    fill: #9cc7ee;
    stroke: #456a92;
    stroke-width: 2;
}

.k2{
    fill: #6db8f5;
    stroke: #16324e;
    stroke-width: 3;
}

.r{
    fill: #fff;
    stroke: #333;
    stroke-width: 3;
}

.a{
    fill: #ddd;
    stroke: #444;
    stroke-width: 3;
}

.pale{
    fill: #f6f6f6;
}

/* left column */
.left-col{
    width: 180px;
    padding-right: 4px;
    display: flex;
    flex-direction: column;
}

.palette{
    display: flex;
    flex-direction: column;
    border-bottom: 1px solid #a0a0a0;
}

.basic{
    flex: 1;
    margin-bottom: 4px;
}

.tools{
    display: grid;
    grid-template-columns: repeat(5, 32px);
    grid-auto-rows: 22px;
    gap: 1px;
    margin-top: 2px;
    background: #fff;
}

.grow{
    flex: 1;
}

.set{
    height: 177px;
}

.tools svg{
    width: 32px;
    height: 22px;
}

.tools .on{
    background: #d3e6f5;
    box-shadow: inset 0 0 0 1px #0078d7;
}

.sets button{
    display: flex;
    align-items: center;
    width: 100%;
    height: 22px;
    padding-top: 1px;
    border: 1px solid #a0a0a0;
    background: linear-gradient(#ececec, #cfcfcf);
    font: bold 12px/16px "Liberation Mono", monospace;
}

.sets .on{
    border-color: #0078d7;
    background: linear-gradient(#b9e2ea, #5b7d89);
}

.sets svg{
    width: 28px;
    height: 20px;
    margin-right: 6px;
}

/* drawing area with floating windows */
.canvas{
    flex: 1;
    position: relative;
    background: #ababab;
}

.window{
    position: absolute;
    padding: 2px;
    background: #f0f0f0;
    border: 2px solid;
    border-color: #fff #696969 #696969 #fff;
}

.win-head{
    display: flex;
    align-items: center;
    height: 23px;
    padding: 0 4px 0 2px;
    background: #bfcddb;
}

.win-head h2{
    flex: 1;
    font-size: 13px;
    white-space: nowrap;
}

.win-head button{
    width: 9px;
    margin-left: 12px;
}

.win-head svg{
    height: 9px;
    fill: none;
    stroke: #111;
}

.win-head .q{
    height: 11px;
    stroke: #444;
}

.attributes{
    left: 24px;
    top: 100px;
    width: 148px;
}

.attr-row{
    display: flex;
    align-items: center;
    height: 28px;
    padding: 0 5px 0 2px;
}

.attr-icon{
    width: 15px;
    height: 15px;
}

.swatch{
    width: 14px;
    height: 14px;
    margin-left: 10px;
    background: #222;
    border: 1px solid #000;
}

.pick{
    flex: 1;
    display: flex;
    align-items: center;
    font: 12px/16px "Liberation Mono", monospace;
}

.pick select{
    flex: 1;
    width: 40px;
    padding: 1px 0 0 24px;
}

.pick::after{
    content: "";
    border: 5px solid transparent;
    border-top-color: #000;
    border-bottom: 0;
    margin-right: 2px;
}

.ink{
    display: block;
    width: 118px;
    height: 34px;
    margin-left: auto;
    margin-right: 3px;
    background: #000;
}

.opacity{
    display: block;
    height: 20px;
    font: 10px/20px "Liberation Mono", monospace;
    text-align: center;
}

.sliders{
    display: flex;
    gap: 4px;
    margin: 2px 3px 4px;
    height: 15px;
}

.sliders input{
    appearance: none;
    flex: 1;
    min-width: 0;
    height: 15px;
    background: #6d6d6d;
    border: 1px solid #a0a0a0;
}

.sliders input::-webkit-slider-thumb{
    appearance: none;
    width: 16px;
    height: 15px;
    background: #6d6d6d;
    border: 1px solid #a0a0a0;
    border-left: 2px solid #fff;
}

.sliders button{
    width: 35px;
    background: #6d6d6d;
    border: 1px solid #a0a0a0;
}

.line-style{
    display: block;
    width: 134px;
    height: 16px;
    margin: 0 3px;
    background: #fff;
    border: 1px solid #a0a0a0;
}

.markers{
    display: flex;
    justify-content: space-between;
    align-items: center;
    height: 22px;
    padding: 0 12px 0 8px;
    border-bottom: 1px solid #a0a0a0;
}

.markers svg{
    width: 16px;
    height: 10px;
}

.attributes .fold{
    margin: 3px auto;
}

.snapping{
    position: absolute;
    left: 24px;
    top: 349px;
    width: 141px;
    border: 2px solid #888;
    background: #f0f0f0;
}

.snapping .win-head{
    height: 25px;
    background: #888;
    color: #fff;
    border-top: 1px solid #fff;
}

.snapping .x svg{
    stroke: #fff;
}

.snap-grid{
    display: grid;
    grid-template-columns: repeat(4, 33px);
    padding-left: 2px;
}

.snap-grid svg{
    width: 33px;
    height: 30px;
}

.resources{
    left: 197px;
    top: 98px;
    width: 962px;
}

.toolbar{
    display: flex;
    align-items: center;
    height: 28px;
    padding: 0 2px 2px 1px;
}

.toolbar > button{
    width: 33px;
    height: 26px;
    flex: none;
}

.toolbar > button svg{
    width: 33px;
    height: 26px;
}

.sep{
    width: 1px;
    height: 26px;
    margin: 0 4px 0 3px;
    flex: none;
    background: #c8c8c8;
}

.toolbar > .caret{
    width: 13px;
}

.caret::after{
    content: "";
    display: block;
    width: 0;
    margin: 0 auto;
    border: 2px solid transparent;
    border-top: 3px solid #000;
    border-bottom: 0;
}

.types{
    display: flex;
    align-items: center;
    width: 117px;
    height: 26px;
    border: 1px solid #99b4d1;
    background: #fff;
    padding: 0 3px 0 6px;
    font: 12px/16px "Noto Sans", sans-serif;
}

.types select{
    flex: 1;
    min-width: 0;
}

.types::after, .combo::after{
    content: "";
    border: 2px solid transparent;
    border-top: 3px solid #000;
    border-bottom: 0;
}

.search{
    flex: 1;
    display: flex;
    align-items: center;
    height: 26px;
    padding: 0 5px 0 6px;
    border: 1px solid #99b4d1;
    background: #fff;
}

.search input, .nav-search input{
    flex: 1;
    min-width: 0;
}

.search svg, .nav-search svg{
    width: 15px;
    height: 15px;
    fill: none;
    stroke: #5a78a8;
}

::placeholder{
    color: #757575;
}

.panes{
    display: grid;
    grid-template-columns: 274px 1fr 242px;
    gap: 3px;
    height: 538px;
    margin-right: 1px;
}

.pane{
    border: 1px solid #a0a0a0;
    background: #fff;
    box-shadow: inset 0 0 0 1px #e8e8e8;
}

.items{
    display: flex;
    flex-direction: column;
    padding: 1px;
}

.crumb{
    height: 22px;
    padding: 3px;
    margin-right: 4px;
    border-bottom: 1px solid #a0a0a0;
}

.crumb svg{
    width: 14px;
    height: 14px;
}

.items p{
    flex: 1;
    display: flex;
    align-items: center;
    justify-content: center;
    padding: 1px 0 0 2px;
    font: bold 12px/16px "DejaVu Sans Condensed", sans-serif;
    color: #404040;
}

.items-foot{
    height: 20px;
    margin-right: 4px;
    border-top: 1px solid #a0a0a0;
}

.details{
    display: flex;
    flex-direction: column;
    gap: 3px;
}

.preview{
    height: 278px;
    display: flex;
    flex-direction: column;
    padding: 2px;
}

.preview p{
    flex: 1;
    padding-top: 137px;
    text-align: center;
    font: 10px/16px "Liberation Mono", monospace;
    color: #606060;
}

.preview p, .data p, .list p{
    padding-left: 10px;
    padding-right: 10px;
}

.render-bar{
    display: flex;
    height: 26px;
    background: #99b4d1;
}

.render-bar button + button{
    border-left: 1px solid #c8c8c8;
}

.render-bar svg{
    width: 45px;
    height: 26px;
}

.data{
    flex: 1;
    display: flex;
    flex-direction: column;
    padding: 1px 2px 2px 1px;
    font: 10px/12px "Liberation Mono", monospace;
}

.data h3{
    height: 21px;
    font: bold 12px/14px "Liberation Mono", monospace;
}

.data-box{
    flex: 1;
    border: solid #696969;
    border-width: 1px 0 0 1px;
}

.data p{
    padding-top: 51px;
    text-align: center;
}

.actions{
    display: flex;
    height: 28px;
    padding: 1px 0 0 9px;
}

.actions button{
    height: 26px;
    padding: 1px 4px 0 3px;
    border: 1px solid #99b4d1;
    background: #fff;
    font: 10px/16px "Liberation Mono", monospace;
}

/* right column */
.right-col{
    width: 230px;
    padding-left: 6px;
    display: flex;
    flex-direction: column;
}

.info{
    display: flex;
    flex-direction: column;
    height: 484px;
    margin-bottom: 6px;
}

.navigation{
    flex: 1;
    display: flex;
    flex-direction: column;
}

.tabs{
    display: flex;
    height: 26px;
    padding: 4px 4px 0 2px;
    flex: none;
}

.tabs button{
    position: relative;
    padding: 0 6px 2px 5px;
}

.tabs button:not(.more)::after{
    content: "";
    position: absolute;
    right: 0;
    top: 4px;
    width: 1px;
    height: 14px;
    background: #a0a0a0;
}

.tabs .on{
    border: solid #fff;
    border-width: 1px 0 0 1px;
}

.tabs button.on::after{
    top: 0;
    height: 20px;
    background: #000;
}

.tabs .more{
    margin: 2px 0 0 auto;
    width: 24px;
    height: 12px;
    padding: 0;
    border-radius: 4px;
    background: #a0a0a0;
}

.more::after{
    content: "";
    display: block;
    width: 0;
    margin: 0 auto;
    border: 3px solid transparent;
    border-left: 4px solid #fff;
    border-right: 0;
}

.icon-tabs button:not(.more){
    padding: 0;
    width: 29px;
}

.icon-tabs svg{
    width: 28px;
    height: 20px;
}

.tab-body{
    flex: 1;
    display: flex;
    flex-direction: column;
    border: 1px solid #a0a0a0;
    border-top-color: #fff;
    padding: 4px 2px;
    font: 10px/14px "Liberation Mono", monospace;
}

.tab-body label{
    padding-top: 2px;
}

.shape-type{
    height: 20px;
    border: 1px solid #696969;
}

.name-row{
    display: flex;
    align-items: center;
    gap: 5px;
    margin-top: auto;
    margin-bottom: -2px;
    padding-left: 3px;
}

.name-row input{
    flex: 1;
    min-width: 0;
    height: 16px;
    background: #fff;
    border: 1px solid #696969;
}

.navigation .tab-body{
    padding: 10px 2px 4px;
}

.field{
    position: relative;
    display: flex;
    align-items: center;
    justify-content: space-between;
    height: 20px;
    margin-bottom: 10px;
    padding-left: 4px;
}

.combo{
    display: flex;
    align-items: center;
    width: 124px;
    height: 20px;
    padding-right: 8px;
    background: linear-gradient(#f0f0f0, #f0f0f0) 105px 1px / 15px 16px no-repeat #fff;
    border: 1px solid #a0a0a0;
}

.combo select{
    flex: 1;
    min-width: 0;
}

/* floating over the filter box */
.upload{
    position: absolute;
    right: 5px;
    top: 0;
    display: flex;
    align-items: center;
    width: 128px;
    height: 32px;
    overflow: hidden;
    border: 1px solid #06a7ff;
    border-radius: 8px;
    background: #eef8ff;
    color: #06a7ff;
    font: 12px/18px "Noto Sans CJK SC", sans-serif;
}

.upload svg{
    width: 36px;
    height: 32px;
    background: linear-gradient(135deg, #06a7ff, #0683ff);
}

.upload span{
    flex: 1;
    padding-right: 6px;
}

.nav-search{
    display: flex;
    align-items: center;
    height: 19px;
    padding: 1px 3px 0 2px;
    background: #fff;
    border: solid #696969;
    border-width: 1px 0 0 1px;
}

.list{
    flex: 1;
    display: flex;
    flex-direction: column;
    margin-top: 11px;
    padding: 1px 2px 2px 1px;
    background: #fff;
    border: solid #696969;
    border-width: 1px 0 0 1px;
}

.list table{
    width: 100%;
    border-collapse: collapse;
    background: #f0f0f0;
}

.list th{
    height: 21px;
    padding: 1px 4px 0;
    border: solid #696969;
    border-width: 0 0 1px 1px;
    font-weight: normal;
    text-align: left;
}

.list .vis{
    width: 50px;
}

.list .gap{
    width: 25px;
}

.list p{
    flex: 1;
    padding-top: 47px;
    line-height: 12px;
    text-align: center;
}

.scroll{
    display: flex;
    align-items: center;
    height: 15px;
    padding: 0 4px;
    background: #f0f0f0;
}

.scroll svg{
    width: 9px;
    height: 9px;
    fill: none;
    stroke: #505050;
    stroke-width: 2;
}

.thumb{
    width: 102px;
    height: 15px;
    margin: 0 auto 0 4px;
    background: #cdcdcd;
}

/* bottom */
.status{
    display: flex;
    align-items: center;
    height: 22px;
    padding: 1px 1px 0 5px;
}

.hint{
    flex: 1;
    padding-top: 1px;
}

.key{
    height: 18px;
    margin: 2px 2px 0 0;
    padding: 0 1px;
    border: 1px solid #a0a0a0;
}

.status svg{
    width: 4px;
    height: 8px;
    margin-left: 2px;
}

.taskbar{
    display: flex;
    height: 8px;
    overflow: hidden;
    background: #1a2b29;
    color: #fff;
    font-size: 12px;
}

.task{
    width: 48px;
    margin-left: 245px;
    background: #46514f;
}

.clock{
    margin: 3px 74px 0 auto;
}
```
